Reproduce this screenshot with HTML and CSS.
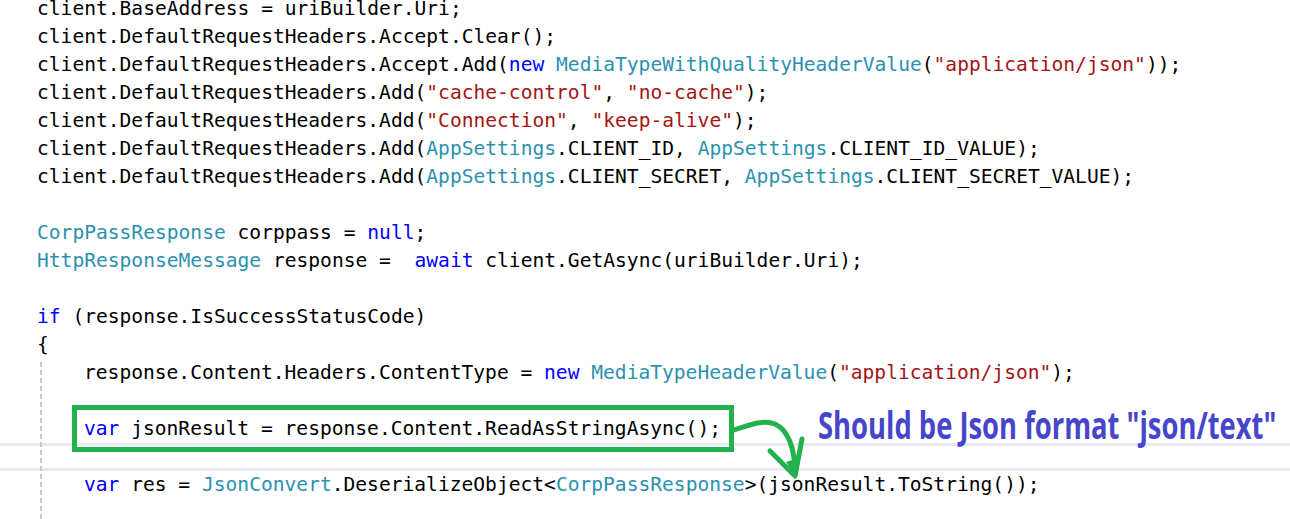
FILE: index.html
```html
<!DOCTYPE html>
<html>
<head>
<meta charset="utf-8">
<link rel="stylesheet" href="styles.css">
</head>
<body>
<div class="editor">
  <div class="hline hline-a"></div>
  <div class="hline hline-b"></div>
  <div class="code">
    <div class="ln">client.BaseAddress = uriBuilder.Uri;</div>
    <div class="ln">client.DefaultRequestHeaders.Accept.Clear();</div>
    <div class="ln">client.DefaultRequestHeaders.Accept.Add(<span class="k">new</span> <span class="t">MediaTypeWithQualityHeaderValue</span>(<span class="s">"application/json"</span>));</div>
    <div class="ln">client.DefaultRequestHeaders.Add(<span class="s">"cache-control"</span>, <span class="s">"no-cache"</span>);</div>
    <div class="ln">client.DefaultRequestHeaders.Add(<span class="s">"Connection"</span>, <span class="s">"keep-alive"</span>);</div>
    <div class="ln">client.DefaultRequestHeaders.Add(<span class="t">AppSettings</span>.CLIENT_ID, <span class="t">AppSettings</span>.CLIENT_ID_VALUE);</div>
    <div class="ln">client.DefaultRequestHeaders.Add(<span class="t">AppSettings</span>.CLIENT_SECRET, <span class="t">AppSettings</span>.CLIENT_SECRET_VALUE);</div>
    <div class="ln"></div>
    <div class="ln"><span class="t">CorpPassResponse</span> corppass = <span class="k">null</span>;</div>
    <div class="ln"><span class="t">HttpResponseMessage</span> response =  <span class="k">await</span> client.GetAsync(uriBuilder.Uri);</div>
    <div class="ln"></div>
    <div class="ln"><span class="k">if</span> (response.IsSuccessStatusCode)</div>
    <div class="ln">{</div>
    <div class="block">
      <div class="ln">response.Content.Headers.ContentType = <span class="k">new</span> <span class="t">MediaTypeHeaderValue</span>(<span class="s">"application/json"</span>);</div>
      <div class="ln"></div>
      <div class="ln"><span class="k">var</span> jsonResult = response.Content.ReadAsStringAsync();</div>
      <div class="ln"></div>
      <div class="ln"><span class="k">var</span> res = <span class="t">JsonConvert</span>.DeserializeObject&lt;<span class="t">CorpPassResponse</span>&gt;(jsonResult.ToString());</div>
      <div class="ln"></div>
    </div>
  </div>
  <div class="callout-box"></div>
  <svg class="arrow" width="1290" height="519" viewBox="0 0 1290 519">
    <path d="M733 430 C748 426 762 419 775 424 C788 430 795 448 795 474" fill="none" stroke="#22b14c" stroke-width="5" stroke-linecap="round"/>
    <path d="M770 451 L795 476 L802 439" fill="none" stroke="#22b14c" stroke-width="5" stroke-linecap="round" stroke-linejoin="round"/>
    <path d="M786 462 L795 476 L799 458 Z" fill="#22b14c"/>
  </svg>
  <div class="note">Should be Json format "json/text"</div>
</div>
</body>
</html>
```

FILE: styles.css
```css
html, body {
  margin: 0;
  padding: 0;
  background: #ffffff;
  overflow: hidden;
}

.editor {
  position: relative;
  width: 1290px;
  height: 519px;
  overflow: hidden;
  background: #ffffff;
}

.code {
  position: relative;
  margin-top: -5px;
  padding-left: 37px;
  font-family: "DejaVu Sans Mono", "Liberation Mono", monospace;
  font-size: 19.6px;
  line-height: 28px;
  color: #000000;
}

.ln {
  height: 28px;
  white-space: pre;
}

.k { color: #0000ff; }
.t { color: #2b91af; }
.s { color: #a31515; }

.block {
  position: relative;
  padding-left: 47px;
}

.block::before {
  content: "";
  position: absolute;
  left: 3px;
  top: 3px;
  bottom: 0;
  width: 2px;
  background: repeating-linear-gradient(to bottom, #c9c9c9 0, #c9c9c9 5px, transparent 5px, transparent 8px);
}

.hline {
  position: absolute;
  left: 0;
  width: 1290px;
  height: 3px;
  background: #e9e9f1;
}

.hline-a { top: 443px; }
.hline-b { top: 468px; }

.callout-box {
  position: absolute;
  left: 72px;
  top: 405px;
  width: 652px;
  height: 37px;
  border: 5px solid #22b14c;
}

.arrow {
  position: absolute;
  left: 0;
  top: 0;
}

.note {
  position: absolute;
  left: 818px;
  top: 402px;
  font-family: "Open Sans", "DejaVu Sans", sans-serif;
  font-weight: 700;
  font-size: 37px;
  line-height: 46px;
  color: #4646cc;
  white-space: nowrap;
  transform: scaleX(0.74);
  transform-origin: left top;
}
```
